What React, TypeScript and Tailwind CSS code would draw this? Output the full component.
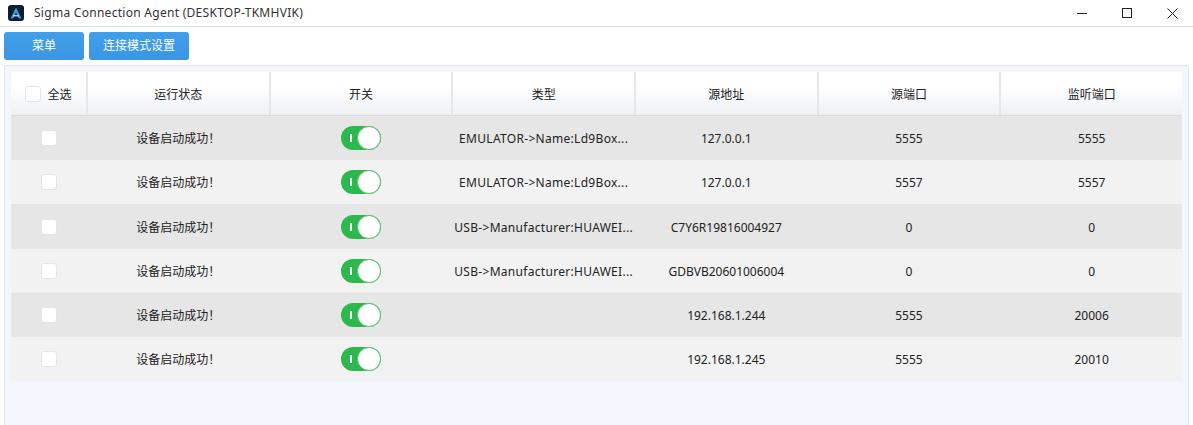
const font = "font-['Noto_Sans','Noto_Sans_CJK_SC',sans-serif]";

const headers = ["运行状态", "开关", "类型", "源地址", "源端口", "监听端口"];

const rows = [
  { type: "EMULATOR->Name:Ld9Box...", addr: "127.0.0.1", src: "5555", port: "5555" },
  { type: "EMULATOR->Name:Ld9Box...", addr: "127.0.0.1", src: "5557", port: "5557" },
  { type: "USB->Manufacturer:HUAWEI...", addr: "C7Y6R19816004927", src: "0", port: "0" },
  { type: "USB->Manufacturer:HUAWEI...", addr: "GDBVB20601006004", src: "0", port: "0" },
  { type: "", addr: "192.168.1.244", src: "5555", port: "20006" },
  { type: "", addr: "192.168.1.245", src: "5555", port: "20010" },
];

function Check() {
  return <span className="block w-4 h-4 bg-white rounded-[3px] border border-[#e4e4e4]" />;
}

function Toggle() {
  return (
    <span className="relative block w-10 h-6 rounded-full bg-[#2db84d]">
      <span className="absolute left-[9px] top-[8px] w-[2px] h-2 bg-white" />
      <span className="absolute right-0 top-0 w-6 h-6 rounded-full bg-white border border-[#5cbf72]" />
    </span>
  );
}

export default function App() {
  return (
    <div className={`${font} w-[1193px] h-[425px] overflow-hidden bg-white text-[12px] text-[#222]`}>
      {/* Title bar */}
      <div className="h-[27px] flex items-center border-b border-[#dcdcdc]">
        <svg width="16" height="16" viewBox="0 0 16 16" className="ml-2">
          <rect width="16" height="16" rx="3" fill="#0f1c30" />
          <path d="M2.5 13.5 L8 2.5 L13.5 13.5 L10.8 13.5 L8 7.5 L5.2 13.5 Z" fill="#3d9be9" />
          <rect x="5" y="10" width="6" height="1.5" fill="#9fd0f5" />
        </svg>
        <span className="ml-[10px] text-[12px] text-[#333] tracking-[0.28px]">Sigma Connection Agent (DESKTOP-TKMHVIK)</span>
        <div className="ml-auto flex items-center gap-[35px] pr-[15px]">
          <svg width="10" height="10" viewBox="0 0 10 10" stroke="#222" fill="none">
            <path d="M0 5.5 H10" />
          </svg>
          <svg width="10" height="10" viewBox="0 0 10 10" stroke="#222" fill="none">
            <rect x="0.5" y="0.5" width="9" height="9" />
          </svg>
          <svg width="11" height="11" viewBox="0 0 11 11" stroke="#222" fill="none">
            <path d="M0.5 0.5 L10.5 10.5 M10.5 0.5 L0.5 10.5" />
          </svg>
        </div>
      </div>

      {/* Toolbar */}
      <div className="h-[38px] flex items-center gap-[5px] pl-1">
        <button className="w-20 h-7 rounded-[3px] bg-gradient-to-b from-[#419fea] to-[#3a96e2] text-white">菜单</button>
        <button className="w-[100px] h-7 rounded-[3px] bg-gradient-to-b from-[#419fea] to-[#3a96e2] text-white">连接模式设置</button>
      </div>

      {/* Table panel */}
      <div className="mx-1 h-[360px] rounded-t-[3px] border border-b-0 border-[#e4e6ee] bg-[#f3f6fd] px-[6px] pt-[6px]">
        <div className="h-[44.1px] grid grid-cols-[77px_repeat(5,182.67px)_minmax(0,1fr)] border-b border-[#dcdcdc] bg-gradient-to-b from-white from-30% to-[#eff0f3]">
          <div className="flex items-center justify-center gap-[6px] border-r-2 border-[#e6e7ea]">
            <Check />
            <span className="pt-[2px]">全选</span>
          </div>
          {headers.map((h) => (
            <div key={h} className="pt-[2px] flex items-center justify-center border-r-2 border-[#e6e7ea] last:border-r-0">
              {h}
            </div>
          ))}
        </div>
        {rows.map((r, i) => (
          <div
            key={i}
            className={`h-[44.2px] grid grid-cols-[77px_repeat(5,182.67px)_minmax(0,1fr)] items-center ${i % 2 === 0 ? "bg-[#e6e6e6]" : "bg-[#f2f2f2]"}`}
          >
            <div className="pr-[2px] flex justify-center">
              <Check />
            </div>
            <div className="pt-[2px] pr-[2px] text-center">设备启动成功！</div>
            <div className="pr-[2px] flex justify-center">
              <Toggle />
            </div>
            <div className="pt-[2px] pr-[2px] text-center whitespace-nowrap overflow-hidden tracking-[0.3px]">{r.type}</div>
            <div className="pt-[2px] pr-[2px] text-center">{r.addr}</div>
            <div className="pt-[2px] pr-[2px] text-center">{r.src}</div>
            <div className="pt-[2px] text-center">{r.port}</div>
          </div>
        ))}
      </div>
    </div>
  );
}
